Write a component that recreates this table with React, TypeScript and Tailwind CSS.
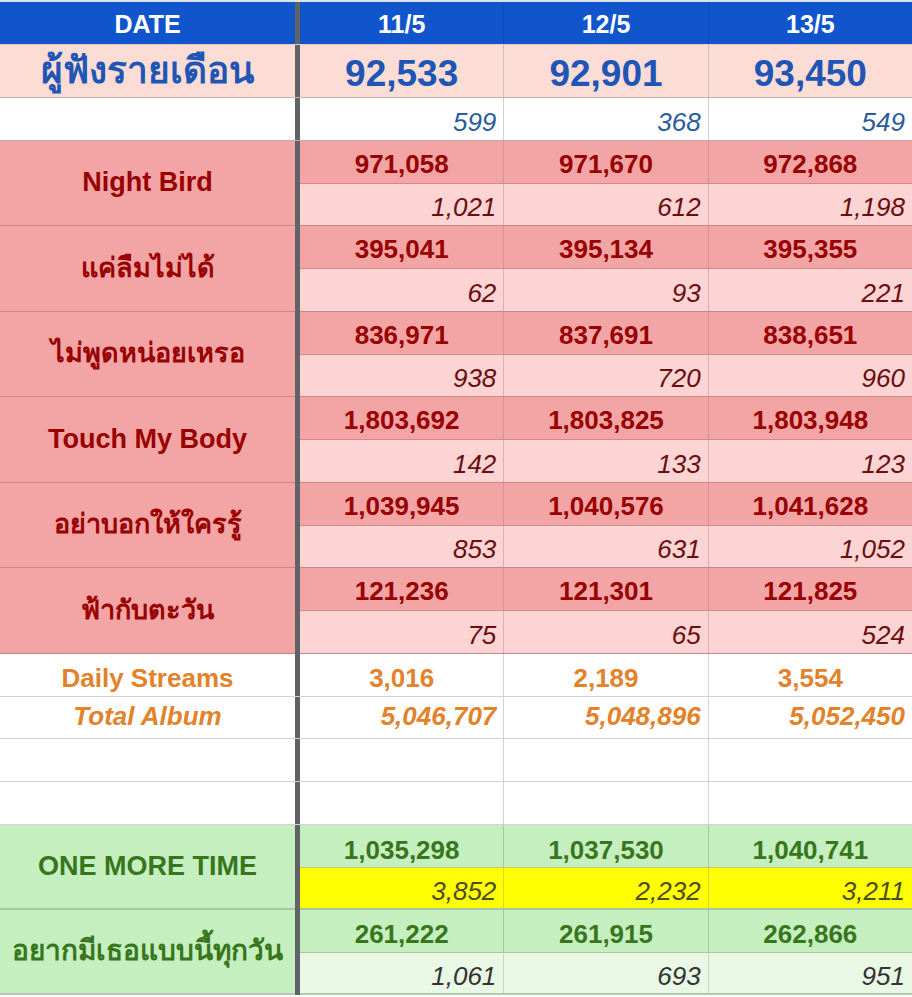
import React from 'react';

const dates = ['11/5', '12/5', '13/5'];
const listeners = ['92,533', '92,901', '93,450'];
const listenerDiff = ['599', '368', '549'];

const songs = [
    { name: 'Night Bird', total: ['971,058', '971,670', '972,868'], daily: ['1,021', '612', '1,198'] },
    { name: 'แค่ลืมไม่ได้', total: ['395,041', '395,134', '395,355'], daily: ['62', '93', '221'] },
    { name: 'ไม่พูดหน่อยเหรอ', total: ['836,971', '837,691', '838,651'], daily: ['938', '720', '960'] },
    { name: 'Touch My Body', total: ['1,803,692', '1,803,825', '1,803,948'], daily: ['142', '133', '123'] },
    { name: 'อย่าบอกให้ใครรู้', total: ['1,039,945', '1,040,576', '1,041,628'], daily: ['853', '631', '1,052'] },
    { name: 'ฟ้ากับตะวัน', total: ['121,236', '121,301', '121,825'], daily: ['75', '65', '524'] },
];

const dailyStreams = ['3,016', '2,189', '3,554'];
const totalAlbum = ['5,046,707', '5,048,896', '5,052,450'];

function Bar() {
    return <div className="w-[5px] shrink-0 self-stretch bg-[#5f6368]" />;
}

function Row({ className, children }: { className?: string; children: React.ReactNode }) {
    return <div className={`flex h-[42.75px] border-b ${className ?? ''}`}>{children}</div>;
}

export default function App() {
    return (
        <div className="w-[912px] h-[997px] overflow-hidden bg-white leading-[1.15] font-['Liberation_Sans','Noto_Sans',sans-serif]">
            <div className="h-[2px] bg-[#dde3ea]" />

            {/* header */}
            <div className="flex h-[43px] border-b border-[#e8c8c2] bg-[#1155cc] text-white font-bold text-[25px]">
                <div className="w-[295px] flex items-end justify-center pb-[5px]">DATE</div>
                <Bar />
                {dates.map((d, i) => (
                    <div key={d} className={`flex-1 flex items-end justify-center pb-[5px] ${i < 2 ? 'border-r border-[#0f4bb0]' : ''}`}>{d}</div>
                ))}
            </div>

            {/* monthly listeners */}
            <div className="flex h-[53px] border-b border-[#c9b3ae] bg-[#fcddd6] text-[#1f55b5] font-bold">
                <div className="w-[295px] flex items-center justify-center text-[37px]">ผู้ฟังรายเดือน</div>
                <Bar />
                {listeners.map((n, i) => (
                    <div key={i} className={`flex-1 flex items-end justify-center pb-[1px] text-[37px] ${i < 2 ? 'border-r border-[#cfc0bc]' : ''}`}>{n}</div>
                ))}
            </div>
            <Row className="border-[#c8a8a8]">
                <div className="w-[295px]" />
                <Bar />
                {listenerDiff.map((n, i) => (
                    <div key={i} className={`flex-1 flex items-end justify-end pr-[7px] pb-[2px] italic text-[26px] text-[#2a5b9e] ${i < 2 ? 'border-r border-[#d0d0d0]' : ''}`}>{n}</div>
                ))}
            </Row>

            {/* songs */}
            {songs.map((s) => (
                <div key={s.name} className="flex">
                    <div className="w-[295px] h-[85.5px] flex items-center justify-center border-b border-[#c98587] bg-[#f3a4a5] text-[#990000] font-bold text-[27px]">
                        {s.name}
                    </div>
                    <Bar />
                    <div className="flex-1 flex flex-col">
                        <Row className="border-[#d08c8e] bg-[#f3a4a5]">
                            {s.total.map((n, i) => (
                                <div key={i} className={`flex-1 flex items-end justify-center pb-[3px] font-bold text-[26px] text-[#990000] ${i < 2 ? 'border-r border-[#d99395]' : ''}`}>{n}</div>
                            ))}
                        </Row>
                        <Row className="border-[#c98587] bg-[#fdd4d4]">
                            {s.daily.map((n, i) => (
                                <div key={i} className={`flex-1 flex items-end justify-end pr-[7px] pb-[2px] italic text-[26px] text-[#6b0d0d] ${i < 2 ? 'border-r border-[#dcb0b0]' : ''}`}>{n}</div>
                            ))}
                        </Row>
                    </div>
                </div>
            ))}

            {/* album */}
            <Row className="border-[#d3d3d3]">
                <div className="w-[295px] flex items-end justify-center pb-[2px] font-bold text-[26px] text-[#e3822a]">Daily Streams</div>
                <Bar />
                {dailyStreams.map((n, i) => (
                    <div key={i} className={`flex-1 flex items-end justify-center pb-[2px] font-bold text-[26px] text-[#e3822a] ${i < 2 ? 'border-r border-[#d3d3d3]' : ''}`}>{n}</div>
                ))}
            </Row>
            <Row className="border-[#d3d3d3]">
                <div className="w-[295px] flex items-center justify-center font-bold italic text-[26px] text-[#e3822a]">Total Album</div>
                <Bar />
                {totalAlbum.map((n, i) => (
                    <div key={i} className={`flex-1 flex items-center justify-end pr-[7px] font-bold italic text-[26px] text-[#e3822a] ${i < 2 ? 'border-r border-[#d3d3d3]' : ''}`}>{n}</div>
                ))}
            </Row>
            {[0, 1].map((r) => (
                <Row key={r} className="border-[#d3d3d3]">
                    <div className="w-[295px]" />
                    <Bar />
                    {[0, 1, 2].map((i) => (
                        <div key={i} className={`flex-1 ${i < 2 ? 'border-r border-[#d3d3d3]' : ''}`} />
                    ))}
                </Row>
            ))}

            {/* ONE MORE TIME */}
            <div className="flex">
                <div className="w-[295px] h-[85px] flex items-center justify-center border-b-2 border-[#a8c4a0] bg-[#c6efbf] text-[#38761d] font-bold text-[27px]">
                    ONE MORE TIME
                </div>
                <Bar />
                <div className="flex-1 flex flex-col">
                    <div className="flex h-[43px] border-b border-[#c9c96a] bg-[#c6efbf]">
                        {['1,035,298', '1,037,530', '1,040,741'].map((n, i) => (
                            <div key={i} className={`flex-1 flex items-end justify-center pb-[1px] font-bold text-[26px] text-[#38761d] ${i < 2 ? 'border-r border-[#a8c4a0]' : ''}`}>{n}</div>
                        ))}
                    </div>
                    <div className="flex h-[42px] border-b-2 border-[#a8c4a0] bg-[#ffff00]">
                        {['3,852', '2,232', '3,211'].map((n, i) => (
                            <div key={i} className={`flex-1 flex items-end justify-end pr-[7px] pb-[1px] italic text-[26px] text-[#4d4d1c] ${i < 2 ? 'border-r border-[#d6d63a]' : ''}`}>{n}</div>
                        ))}
                    </div>
                </div>
            </div>

            {/* อยากมีเธอแบบนี้ทุกวัน */}
            <div className="flex">
                <div className="w-[295px] h-[85px] flex items-center justify-center border-b-2 border-[#b8c8b4] bg-[#c6efbf] text-[#38761d] font-bold text-[28px]">
                    อยากมีเธอแบบนี้ทุกวัน
                </div>
                <Bar />
                <div className="flex-1 flex flex-col">
                    <div className="flex h-[43px] border-b border-[#a8c4a0] bg-[#c6efbf]">
                        {['261,222', '261,915', '262,866'].map((n, i) => (
                            <div key={i} className={`flex-1 flex items-end justify-center pb-[2px] font-bold text-[26px] text-[#38761d] ${i < 2 ? 'border-r border-[#a8c4a0]' : ''}`}>{n}</div>
                        ))}
                    </div>
                    <div className="flex h-[42px] border-b-2 border-[#b8c8b4] bg-[#e9f7e5]">
                        {['1,061', '693', '951'].map((n, i) => (
                            <div key={i} className={`flex-1 flex items-end justify-end pr-[7px] pb-[1px] italic text-[26px] text-[#333333] ${i < 2 ? 'border-r border-[#c6d6c2]' : ''}`}>{n}</div>
                        ))}
                    </div>
                </div>
            </div>
        </div>
    );
}
